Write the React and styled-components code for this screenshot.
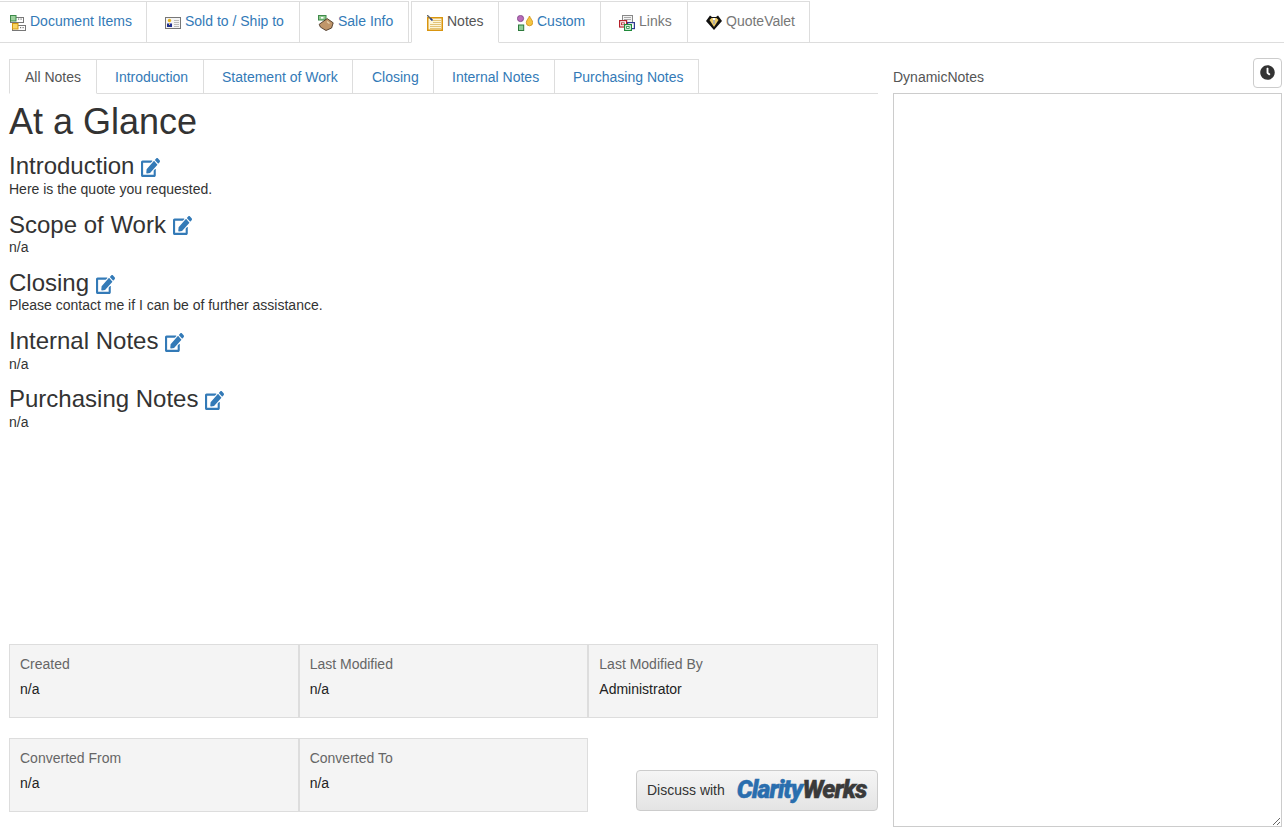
import React from "react";
import styled, { createGlobalStyle } from "styled-components";
import { FaEdit, FaClock } from "react-icons/fa";

const Global = createGlobalStyle`
  * { box-sizing: border-box; }
  html, body { margin: 0; height: 100%; background: #fff; overflow: hidden; }
  body { font-family: "Liberation Sans", Arial, sans-serif; font-size: 14px; line-height: 20px; color: #333; }
`;

const Page = styled.div`width: 1284px; height: 831px; display: flex; flex-direction: column;`;
const TopBar = styled.div`height: 43px; padding-top: 1px; border-bottom: 1px solid #ddd; display: flex; flex-shrink: 0;`;
const TopTab = styled.div`
  width: ${(p) => p.$w}px;
  height: 42px;
  margin-bottom: -1px;
  padding: 9px 0 0 ${(p) => p.$left ?? 14}px;
  margin-right: ${(p) => p.$gap ?? 0}px;
  border-top: 1px solid #ddd;
  border-right: 1px solid #ddd;
  border-left: ${(p) => (p.$active ? "1px solid #ddd" : "0")};
  border-bottom: 1px solid ${(p) => (p.$active ? "#fff" : "#ddd")};
  display: flex;
  align-items: flex-start;
  color: ${(p) => (p.$active ? "#555" : p.$muted ? "#777" : "#337ab7")};
  white-space: nowrap;
`;
const IconSlot = styled.svg`width: 16px; height: 16px; margin: 4px 4px 0 4px; flex-shrink: 0;`;

const Main = styled.div`flex: 1; min-height: 0; display: flex; gap: 15px; padding: 15px 2px 4px 9px;`;
const Left = styled.div`width: 869px; display: flex; flex-direction: column; padding-bottom: 15px;`;
const SubTabs = styled.div`height: 35px; margin-top: 1px; display: flex; border-bottom: 1px solid #ddd; flex-shrink: 0;`;
const SubTab = styled.div`
  width: ${(p) => p.$w}px;
  height: 35px;
  padding: 7px 0 0 ${(p) => p.$left ?? 18}px;
  border-top: 1px solid #ddd;
  border-right: 1px solid #ddd;
  border-left: ${(p) => (p.$active ? "1px solid #ddd" : "0")};
  border-bottom: 1px solid ${(p) => (p.$active ? "#fff" : "#ddd")};
  color: ${(p) => (p.$active ? "#555" : "#337ab7")};
  white-space: nowrap;
`;
const Title = styled.h1`font-size: 36px; font-weight: 400; line-height: 40px; margin: 8px 0 0; color: #333;`;
const Section = styled.section`margin-top: ${(p) => p.$top}px;`;
const SectionTitle = styled.h3`font-size: 24px; font-weight: 400; line-height: 24.6px; margin: 0; color: #333; display: flex; align-items: center; gap: 7px;`;
const EditIcon = styled(FaEdit)`width: 19px; height: 19px; color: #337ab7; margin-top: 2px;`;
const SectionText = styled.div`line-height: 20px; color: #333; height: 20px;`;

const Footer = styled.div`margin-top: auto; display: flex; flex-direction: column; gap: 20px;`;
const InfoRow = styled.div`display: flex; align-items: flex-end;`;
const InfoBox = styled.div`
  width: ${(p) => p.$w}px;
  height: 74px;
  padding: 9px 10px 0;
  background: #f4f4f4;
  border: 1px solid #ddd;
`;
const InfoLabel = styled.div`color: #666; line-height: 20px;`;
const InfoValue = styled.div`color: #222; line-height: 20px; margin-top: 5px;`;
const Discuss = styled.div`
  margin-left: auto;
  margin-bottom: 1px;
  width: 242px;
  height: 41px;
  border: 1px solid #ccc;
  border-radius: 4px;
  background: linear-gradient(#f5f5f5, #e4e4e4);
  display: flex;
  align-items: center;
  padding: 0 0 2px 10px;
  color: #333;
`;
const Logo = styled.div`
  margin-left: 12px;
  font-family: Roboto, "Liberation Sans", sans-serif;
  font-style: italic;
  font-weight: 900;
  font-size: 25px;
  line-height: 26px;
  letter-spacing: -0.95px;
  -webkit-text-stroke: 0.4px currentColor;
  white-space: nowrap;
`;
const LogoBlue = styled.span`color: #2a6eae;`;
const LogoDark = styled.span`color: #3a3a3a;`;

const Right = styled.div`width: 389px; display: flex; flex-direction: column;`;
const NotesHead = styled.div`height: 35px; display: flex; justify-content: space-between;`;
const NotesLabel = styled.div`color: #555; padding-top: 9px;`;
const ClockButton = styled.button`
  width: 29px; height: 30px; padding: 0 0 2px;
  border: 1px solid #ccc; border-radius: 4px; background: #fff; color: #333;
  display: flex; align-items: center; justify-content: center; font: inherit;
`;
const ClockIcon = styled(FaClock)`width: 15px; height: 15px;`;
const NotesArea = styled.textarea`
  flex: 1; width: 389px; display: block; border: 1px solid #ccc; outline: 0; background: #fff; margin: 0; padding: 6px;
  resize: both; font: inherit; color: #333;
`;

const DocIcon = () => (
  <IconSlot viewBox="0 0 16 16">
    <rect x="0.5" y="2.5" width="13" height="5" fill="#fff" stroke="#777" />
    <rect x="0.5" y="0.5" width="5.5" height="5.5" fill="#9cd09c" stroke="#3d8a4a" />
    <rect x="8" y="3.5" width="1.2" height="1.2" fill="#777" /><rect x="10.5" y="3.5" width="1.2" height="1.2" fill="#777" />
    <rect x="2.5" y="10.5" width="13" height="5" fill="#fff" stroke="#777" />
    <rect x="2.5" y="8.5" width="5.5" height="5.5" fill="#f8d565" stroke="#d49a10" />
    <rect x="10" y="12" width="1.2" height="1.2" fill="#777" /><rect x="12.5" y="12" width="1.2" height="1.2" fill="#777" />
  </IconSlot>
);
const CardIcon = () => (
  <IconSlot viewBox="0 0 16 16">
    <rect x="0.5" y="2.5" width="15" height="11" fill="#f4f4f4" stroke="#777" />
    <circle cx="4.5" cy="5.5" r="1.7" fill="#e9b520" />
    <path d="M2 12V8.5h5V12z" fill="#20308f" />
    <path d="M4 8.5h1v1.5H4z" fill="#f2d35a" />
    <path d="M9 5.5h5M9 7.5h5M9 9.5h5M9 11.5h5" stroke="#bbb" />
  </IconSlot>
);
const BoxIcon = () => (
  <IconSlot viewBox="0 0 16 16">
    <rect x="0.5" y="0.5" width="7.5" height="4.5" fill="#8fc98f" stroke="#3f8a4a" />
    <rect x="3" y="2" width="2.4" height="1.6" fill="#fff" />
    <path d="M1.2 9.3L9.2 3.6l6 4.2-1.6 5.2-5.6 2.5-5.6-3.4z" fill="#c0966a" stroke="#4a3626" strokeWidth="0.9" />
    <path d="M9 6.5l2.5 2" stroke="#e8d3b0" strokeWidth="1.2" />
  </IconSlot>
);
const NotesIcon = () => (
  <IconSlot viewBox="0 0 16 16">
    <rect x="0.75" y="2.75" width="14.5" height="12.5" fill="#fdf5d8" stroke="#d9950f" strokeWidth="1.5" />
    <path d="M6 5.5h8M6 7.5h8M3 9.5h11M3 11.5h11M3 13.5h11" stroke="#e3c377" />
    <path d="M0 0l5 5" stroke="#666" strokeWidth="1.4" />
    <path d="M3.5 3.5l2 2" stroke="#223a8f" strokeWidth="1.6" />
  </IconSlot>
);
const CustomIcon = () => (
  <IconSlot viewBox="0 0 16 16">
    <circle cx="3.5" cy="3.5" r="3.1" fill="#b86cb8" stroke="#7a3d84" strokeWidth="0.8" />
    <path d="M12.5 1c.8 2.4 3.2 4.2 3.2 6.6a3.2 3.2 0 0 1-6.4 0c0-2.4 2.4-4.2 3.2-6.6z" fill="#f4c542" stroke="#cf8f12" strokeWidth="0.8" />
    <rect x="1.5" y="10" width="5.2" height="5.5" fill="#8fcf9a" stroke="#2d7a3c" />
  </IconSlot>
);
const LinksIcon = () => (
  <IconSlot viewBox="0 0 16 16">
    <rect x="3.5" y="0.5" width="10" height="9" fill="#f3f3f3" stroke="#888" />
    <path d="M5 2.5h7M5 4.5h7" stroke="#aaa" />
    <rect x="8.6" y="7.6" width="6.8" height="6" fill="#fff" stroke="#2f3a90" strokeWidth="1.2" />
    <rect x="0.6" y="5.6" width="7" height="6.4" fill="#fff" stroke="#b5202a" strokeWidth="1.2" />
    <rect x="2.5" y="7.8" width="2.8" height="2" fill="none" stroke="#b5202a" strokeWidth="0.8" />
    <rect x="5.6" y="9.6" width="6.8" height="5.8" fill="#fff" stroke="#1f8a3a" strokeWidth="1.2" />
    <rect x="7.6" y="11.5" width="2.6" height="2" fill="none" stroke="#1f8a3a" strokeWidth="0.8" />
  </IconSlot>
);
const ValetIcon = () => (
  <IconSlot viewBox="0 0 16 16">
    <path d="M0 6L4 0.5 6 2h4l2-1.5L16 6l-8 9z" fill="#111" />
    <path d="M3.5 5L5.5 3h5l2 2L8 12z" fill="#eccb68" />
    <path d="M6.8 3h2.4l-.5 6H7.3z" fill="#fff" />
    <path d="M7.5 5h1v4h-1z" fill="#666" />
  </IconSlot>
);

const sections = [
  ["Introduction", "Here is the quote you requested."],
  ["Scope of Work", "n/a"],
  ["Closing", "Please contact me if I can be of further assistance."],
  ["Internal Notes", "n/a"],
  ["Purchasing Notes", "n/a"],
];

export default function App() {
  return (
    <Page>
      <Global />
      <TopBar>
        <TopTab $w={147} $left={6}><DocIcon />Document Items</TopTab>
        <TopTab $w={153}><CardIcon />Sold to / Ship to</TopTab>
        <TopTab $w={109} $gap={2}><BoxIcon />Sale Info</TopTab>
        <TopTab $w={88} $left={11} $active><NotesIcon />Notes</TopTab>
        <TopTab $w={102}><CustomIcon />Custom</TopTab>
        <TopTab $w={87} $muted><LinksIcon />Links</TopTab>
        <TopTab $w={122} $muted><ValetIcon />QuoteValet</TopTab>
      </TopBar>
      <Main>
        <Left>
          <SubTabs>
            <SubTab $w={88} $left={15} $active>All Notes</SubTab>
            <SubTab $w={107}>Introduction</SubTab>
            <SubTab $w={149}>Statement of Work</SubTab>
            <SubTab $w={81} $left={19}>Closing</SubTab>
            <SubTab $w={121}>Internal Notes</SubTab>
            <SubTab $w={144}>Purchasing Notes</SubTab>
          </SubTabs>
          <Title>At a Glance</Title>
          {sections.map(([t, body], i) => (
            <Section key={t} $top={i === 0 ? 12.3 : 13.65}>
              <SectionTitle>{t}<EditIcon preserveAspectRatio="none" /></SectionTitle>
              <SectionText>{body}</SectionText>
            </Section>
          ))}
          <Footer>
            <InfoRow>
              <InfoBox $w={289.67}><InfoLabel>Created</InfoLabel><InfoValue>n/a</InfoValue></InfoBox>
              <InfoBox $w={289.67}><InfoLabel>Last Modified</InfoLabel><InfoValue>n/a</InfoValue></InfoBox>
              <InfoBox $w={289.66}><InfoLabel>Last Modified By</InfoLabel><InfoValue>Administrator</InfoValue></InfoBox>
            </InfoRow>
            <InfoRow>
              <InfoBox $w={289.67}><InfoLabel>Converted From</InfoLabel><InfoValue>n/a</InfoValue></InfoBox>
              <InfoBox $w={289.67}><InfoLabel>Converted To</InfoLabel><InfoValue>n/a</InfoValue></InfoBox>
              <Discuss>Discuss with<Logo><LogoBlue>Clarity</LogoBlue><LogoDark>Werks</LogoDark></Logo></Discuss>
            </InfoRow>
          </Footer>
        </Left>
        <Right>
          <NotesHead>
            <NotesLabel>DynamicNotes</NotesLabel>
            <ClockButton><ClockIcon /></ClockButton>
          </NotesHead>
          <NotesArea />
        </Right>
      </Main>
    </Page>
  );
}
